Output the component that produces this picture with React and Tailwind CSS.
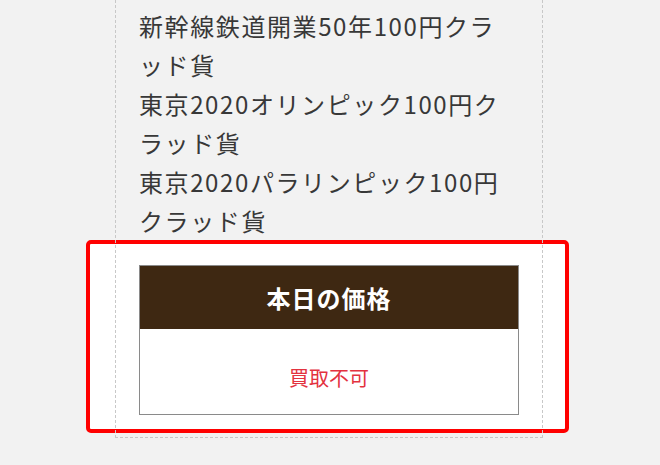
export default function App() {
  const items = [
    ["新幹線鉄道開業50年100円クラ", "ッド貨"],
    ["東京2020オリンピック100円ク", "ラッド貨"],
    ["東京2020パラリンピック100円", "クラッド貨"],
  ];
  return (
    <div
      className="relative isolate h-[465px] w-[660px] overflow-hidden bg-[#f2f2f2]"
      style={{ fontFamily: '"Noto Sans CJK JP", "Noto Sans", sans-serif' }}
    >
      <div className="ml-[115px] w-[428px] border-x border-b border-dashed border-[#c8c8c8] px-[23px] pt-[6px] pb-[4px]">
        <ul className="whitespace-nowrap text-[24px] leading-[39px] tracking-[1.6px] text-[#383838]">
          {items.map(([a, b]) => (
            <li key={a}>
              <span className="block">{a}</span>
              <span className="block">{b}</span>
            </li>
          ))}
        </ul>
        <div className="relative pt-[25px] pb-[18px]">
          <div className="absolute -z-10 left-[-53px] right-[-50px] top-0 bottom-0 rounded-[5px] border-4 border-[#ff0000] bg-white" />
          <div className="border border-[#8a8a8a]">
            <div className="flex h-[63px] items-center justify-center bg-[#3e2812] text-[24px] font-bold tracking-[1px] text-white">
              本日の価格
            </div>
            <div className="flex h-[85px] items-center justify-center pt-[12px] text-[20px] text-[#e3323f]">
              買取不可
            </div>
          </div>
        </div>
      </div>
    </div>
  );
}
